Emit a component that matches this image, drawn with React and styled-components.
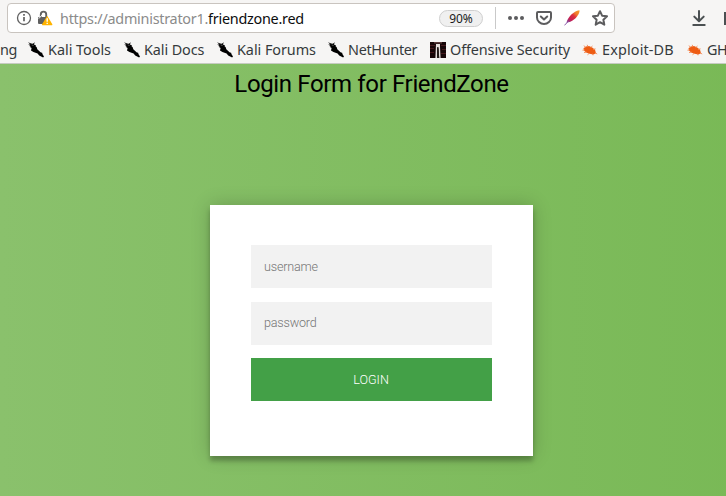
import React from "react";
import styled, { createGlobalStyle } from "styled-components";

const Global = createGlobalStyle`
  * { box-sizing: border-box; }
  html, body { margin: 0; overflow: hidden; }
  button, input { font: inherit; border: 0; border-radius: 0; outline: 0; }
`;

const Window = styled.div`
  width: 726px;
  height: 496px;
  overflow: hidden;
  display: flex;
  flex-direction: column;
  background: #f6f5f4;
`;

const Toolbar = styled.header`
  height: 36px;
  flex: none;
  display: flex;
  align-items: center;
  padding: 0 0 0 7px;
`;

const AddressBar = styled.div`
  width: 608px;
  height: 30px;
  flex: none;
  display: flex;
  align-items: center;
  padding-left: 8px;
  background: #fff;
  border: 1px solid #c9c4bf;
  border-radius: 4px;
`;

const Icon = styled.svg`
  display: block;
  flex: none;
  width: 16px;
  height: 16px;
  margin-left: ${(p) => p.$left || 0}px;
`;

const Url = styled.div`
  width: 386px;
  flex: none;
  padding: 1px 0 0 7px;
  font: 14.4px/20px "Noto Sans", sans-serif;
  letter-spacing: -0.26px;
  color: #8b8b8b;
  white-space: nowrap;
`;

const Host = styled.span`
  color: #0c0c0d;
`;

const Zoom = styled.div`
  width: 44px;
  height: 17px;
  flex: none;
  border: 1px solid #cfcfcf;
  border-radius: 9px;
  background: #f0f0f0;
  color: #1a1a1a;
  font: 12px/15px "Noto Sans", sans-serif;
  text-align: center;
`;

const Divider = styled.div`
  width: 1px;
  height: 22px;
  flex: none;
  margin-left: 12px;
  background: #c9c9c9;
`;

const Bookmarks = styled.nav`
  height: 28px;
  flex: none;
  display: flex;
  gap: 12px;
  align-items: center;
  overflow: hidden;
  border-bottom: 1px solid #c6cbc1;
`;

const Bookmark = styled.div`
  display: flex;
  gap: 4px;
  flex: none;
  align-items: center;
`;

const Label = styled.span`
  width: ${(p) => p.$w}px;
  color: #353a3c;
  font: 14.4px/20px "Noto Sans", sans-serif;
  letter-spacing: ${(p) => p.$track}px;
  white-space: nowrap;
`;

const Page = styled.main`
  flex: 1;
  width: 743px;
  display: flex;
  flex-direction: column;
  align-items: center;
  background: linear-gradient(to left, #79b956, #8ac16c);
  font-family: Roboto, sans-serif;
`;

const Title = styled.h2`
  height: 40px;
  margin: 0 0 101px;
  font-size: 24px;
  line-height: 40px;
  font-weight: 400;
  letter-spacing: -0.36px;
  color: #000;
  white-space: nowrap;
`;

const Card = styled.form`
  width: 323px;
  height: 251px;
  display: flex;
  flex-direction: column;
  padding: 40px 41px;
  background: #fff;
  box-shadow: 0 0 18px rgba(0, 0, 0, 0.2), 0 4.5px 4.5px rgba(0, 0, 0, 0.24);
`;

const Field = styled.input`
  width: 100%;
  height: 43px;
  margin-bottom: ${(p) => p.$gap}px;
  padding: 0 13px ${(p) => p.$lift}px;
  background: #f2f2f2;
  font-size: 12.6px;
  font-weight: 300;
  letter-spacing: -0.2px;
  &::placeholder { color: #757575; opacity: 1; }
`;

const LoginButton = styled.button`
  height: 43px;
  padding: 0 1px 0 0;
  background: #43a047;
  color: #fff;
  font-size: 12.6px;
  font-weight: 300;
`;

const InfoIcon = () => (
  <Icon viewBox="0 0 16 16" fill="none" stroke="#606060">
    <circle cx="8" cy="8" r="6.5" strokeWidth="1.3" />
    <path d="M8 7v4.2M8 4v1.8" strokeWidth="1.7" />
  </Icon>
);

const LockIcon = () => (
  <Icon viewBox="0 0 16 16" $left={5}>
    <path d="M3.8 8V4.3a2.7 2.7 0 0 1 5.4 0V8" fill="none" stroke="#606060" strokeWidth="1.9" />
    <path d="M2 7h9v7H2a1 1 0 0 1-1-1V8a1 1 0 0 1 1-1z" fill="#606060" />
    <path d="M1.8 8.6 6 4" stroke="#fff" strokeWidth="1" />
    <path d="M10.2 5.8 15.2 14a.8.8 0 0 1-.7 1.3H5.9a.8.8 0 0 1-.7-1.3z" fill="#ffb300" />
    <path d="M10.2 8.3v3.4M10.2 12.7v1.3" stroke="#fff" strokeWidth="1.4" />
  </Icon>
);

const DotsIcon = () => (
  <Icon viewBox="0 0 16 16" $left={12} fill="#5c5c5e">
    <circle cx="2" cy="8" r="2" /><circle cx="8" cy="8" r="2" /><circle cx="14" cy="8" r="2" />
  </Icon>
);

const PocketIcon = () => (
  <Icon viewBox="0 0 16 16" $left={12} fill="none" stroke="#5c5c5e" strokeWidth="2" strokeLinecap="round" strokeLinejoin="round">
    <path d="M2 2h12a1 1 0 0 1 1 1v4.5a7 6.5 0 0 1-14 0V3a1 1 0 0 1 1-1z" />
    <path d="m4.8 6.5 3.2 3 3.2-3" />
  </Icon>
);

const FeatherIcon = () => (
  <Icon viewBox="0 0 16 16" $left={12}>
    <defs>
      <linearGradient id="quill" x1="0" y1="1" x2="1" y2="0">
        <stop offset="0" stopColor="#7a3a9a" />
        <stop offset=".3" stopColor="#c81f50" />
        <stop offset=".55" stopColor="#dc2f3c" />
        <stop offset=".72" stopColor="#f07a2c" />
        <stop offset="1" stopColor="#f7a027" />
      </linearGradient>
    </defs>
    <path d="M2.5 12.8C3.4 7.4 9.5 1 15.4.2c.7 2.4-2.2 6.8-5.5 9.4C7.7 11.2 5 12.6 2.5 12.8z" fill="url(#quill)" />
    <path d="m.4 15.4 4.4-4.6" stroke="#8a5aa8" />
  </Icon>
);

const StarIcon = () => (
  <Icon viewBox="0 0 16 16" $left={12} fill="none" stroke="#5c5c5e" strokeWidth="2" strokeLinejoin="round">
    <path d="m8 1.2 2.1 4.5 4.9.6-3.6 3.4.9 5L8 12.2l-4.3 2.5.9-5L1 6.3l4.9-.6z" />
  </Icon>
);

const DownloadIcon = () => (
  <Icon viewBox="0 0 16 16" $left={76} fill="none" stroke="#4b5052" strokeWidth="2" strokeLinecap="round" strokeLinejoin="round">
    <path d="M8 1v10M3.3 6.6 8 11.3l4.7-4.7M2.3 15h11.4" />
  </Icon>
);

const LibraryIcon = () => (
  <Icon viewBox="0 0 16 16" $left={17}>
    <path d="M0 2h2v13H0z" fill="#4b5052" />
  </Icon>
);

const KaliIcon = () => (
  <Icon viewBox="0 0 16 16">
    <path d="M0 .3 3.2 1.6 4.8 1.8 7 .2 5.8 2.4 8 3.2l-.6.8 1.3 1.2.6 2 3.2 3 2 .8-.3.8L16 14.4l-.9 1.2-3.9-2-1.6-2.1L5.4 10 3 8.4 3.6 6 1.6 4.8l1.2-.6L.2 2.4l2.2.2z" fill="#000" />
    <path d="m3.6 2.9 2 .6" stroke="#888" strokeWidth=".6" />
  </Icon>
);

const OffsecIcon = () => (
  <Icon viewBox="0 0 16 16">
    <path fill="#170608" d="M0 0h16v16H0z" />
    <path d="M0 3.5h5M0 6.5h4M0 10.5h4M11 3.5h5M12 7.5h4M11 11.5h5" stroke="#45191d" />
    <path d="M4 0h8v1.5H4z" fill="#5b3b3b" />
    <path d="M6 2h4v3l.6 11H9.2L8.5 6.5 7 5v11H5.4z" fill="#e5dedc" />
    <path d="M7.3 5h1.2l.7 11H7z" fill="#251e1c" />
  </Icon>
);

const BugIcon = () => (
  <Icon viewBox="0 0 16 16">
    <path d="M1.5 6.2 3.8 4.4 7 4l3.2 1.4 2.8 2.4 1 3.4-2.6 1.4-3.8-.8L4 10.4l-2-1.8z" fill="#ee5c13" />
    <path d="m3.5 5.5-1.5-2M6 5 5.2 2.8M8.5 5.7 10.5 4M11 7.5l2.5-.7M3 8 .5 8.2M4.5 10 2 10.6M7 11.5l-1.5 1.3M10.5 11.7l.5 1.6M13 10.5l2.2 1.6" stroke="#f58a55" strokeWidth=".9" />
  </Icon>
);

const bookmarks = [
  ["Kali Tools", 64, -0.02, KaliIcon],
  ["Kali Docs", 61, -0.1, KaliIcon],
  ["Kali Forums", 79, -0.05, KaliIcon],
  ["NetHunter", 70, -0.3, KaliIcon],
  ["Offensive Security", 120, -0.11, OffsecIcon],
  ["Exploit-DB", 73, 0.15, BugIcon],
  ["GH", 19, -0.5, BugIcon],
];

export default function App() {
  return (
    <Window>
      <Global />
      <Toolbar>
        <AddressBar>
          <InfoIcon />
          <LockIcon />
          <Url>https://administrator1.<Host>friendzone.red</Host></Url>
          <Zoom>90%</Zoom>
          <Divider />
          <DotsIcon />
          <PocketIcon />
          <FeatherIcon />
          <StarIcon />
        </AddressBar>
        <DownloadIcon />
        <LibraryIcon />
      </Toolbar>
      <Bookmarks>
        <Label $w={16} $track={-0.4}>ng</Label>
        {bookmarks.map(([name, width, track, Glyph]) => (
          <Bookmark key={name}>
            <Glyph />
            <Label $w={width} $track={track}>{name}</Label>
          </Bookmark>
        ))}
      </Bookmarks>
      <Page>
        <Title>Login Form for FriendZone</Title>
        <Card onSubmit={(e) => e.preventDefault()}>
          <Field placeholder="username" $gap={14} $lift={1} />
          <Field type="password" placeholder="password" $gap={13} $lift={2} />
          <LoginButton>LOGIN</LoginButton>
        </Card>
      </Page>
    </Window>
  );
}
